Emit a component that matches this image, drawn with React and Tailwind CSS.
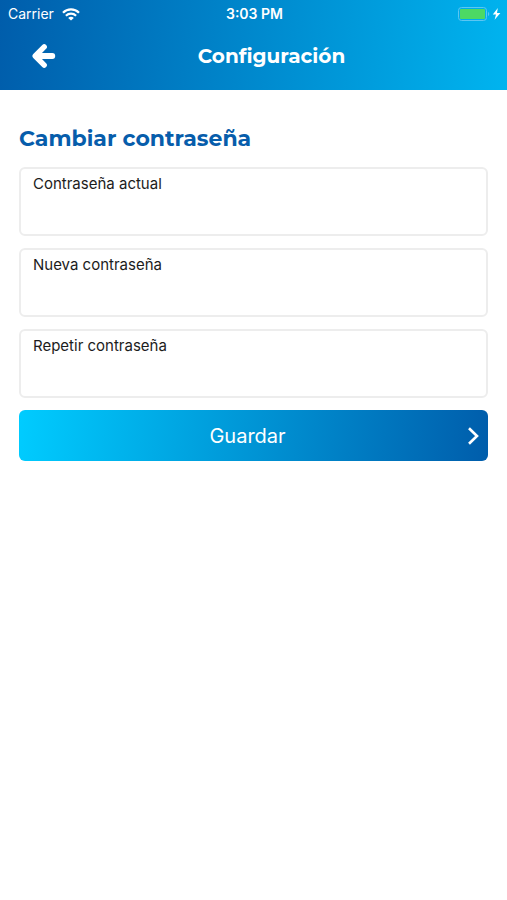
import { useState } from "react";

const FIELDS = [
  { id: "current", label: "Contraseña actual", autoComplete: "current-password" },
  { id: "next", label: "Nueva contraseña", autoComplete: "new-password" },
  { id: "repeat", label: "Repetir contraseña", autoComplete: "new-password" },
];

function WifiIcon() {
  return (
    <svg className="w-[18px] h-[13px]" viewBox="0 0 18 13" fill="none" stroke="currentColor" strokeWidth="2.2">
      <path d="M1 4.7C5.4 0.2 12.6 0.2 17 4.7" />
      <path d="M3.9 7.7C6.8 4.9 11.2 4.9 14.1 7.7" />
      <path d="M9 12.6L6.2 9.9C7.8 8.4 10.2 8.4 11.8 9.9Z" fill="currentColor" stroke="none" />
    </svg>
  );
}

function BatteryIcon() {
  return (
    <svg className="w-[43px] h-[14px]" viewBox="0 0 43 14" fill="none">
      <rect x="0.5" y="0.5" width="28" height="13" rx="3" stroke="#5cc6f3" />
      <rect x="2" y="2" width="25" height="10" rx="1" fill="#4cd964" />
      <path d="M30 5C31.6 5.4 31.6 8.6 30 9Z" fill="#5cc6f3" />
      <path d="M39.8 1L34.8 7.6H38L36.6 12.8L42.4 5.9H39Z" fill="#fff" />
    </svg>
  );
}

function BackIcon() {
  return (
    <svg
      className="w-6 h-6"
      viewBox="0 0 24 24"
      fill="none"
      stroke="currentColor"
      strokeWidth="5.4"
      strokeLinecap="round"
      strokeLinejoin="round"
    >
      <path d="M12.2 2.9L3.2 12L12.2 21.1" />
      <path d="M5 12H20.3" strokeWidth="5.8" />
    </svg>
  );
}

function ChevronIcon() {
  return (
    <svg className="w-3 h-[18px]" viewBox="0 0 12 18" fill="none" stroke="currentColor" strokeWidth="2.6">
      <path d="M1 1.2L9 9L1 16.8" />
    </svg>
  );
}

function StatusBar() {
  return (
    <div className="grid grid-cols-3 items-center h-7 pl-2 pr-1.5 text-sm">
      <div className="flex items-center gap-2">
        <span>Carrier</span>
        <WifiIcon />
      </div>
      <span className="text-center font-semibold">3:03 PM</span>
      <div className="flex justify-end">
        <BatteryIcon />
      </div>
    </div>
  );
}

function PasswordField({ field, value, onChange }) {
  return (
    <div className="flex flex-col h-[69px] border-2 border-[#ededed] rounded-md px-3 pt-[5px]">
      <label htmlFor={field.id} className="text-[15px] leading-5 text-[#1c1c1c]">
        {field.label}
      </label>
      <input
        id={field.id}
        type="password"
        autoComplete={field.autoComplete}
        value={value}
        onChange={(e) => onChange(e.target.value)}
        className="flex-1 min-h-0 w-full bg-transparent outline-none"
      />
    </div>
  );
}

export default function App() {
  const [values, setValues] = useState({ current: "", next: "", repeat: "" });

  function handleSubmit(e) {
    e.preventDefault();
  }

  return (
    <div className="min-h-screen bg-white font-['Inter',sans-serif]">
      <header className="h-[90px] text-white bg-[linear-gradient(95deg,#005dab,#00b4ef)]">
        <StatusBar />
        <div className="flex items-center h-14 pl-8 pr-5">
          <button type="button" aria-label="Volver">
            <BackIcon />
          </button>
          <h1 className="flex-1 text-center font-['Montserrat',sans-serif] text-xl leading-7 font-bold">
            Configuración
          </h1>
        </div>
      </header>

      <main className="px-[19px] pt-[33px]">
        <h2 className="font-['Montserrat',sans-serif] text-[22px] leading-8 font-bold text-[#075dab]">
          Cambiar contraseña
        </h2>
        <form onSubmit={handleSubmit} className="flex flex-col gap-3 mt-3">
          {FIELDS.map((f) => (
            <PasswordField
              key={f.id}
              field={f}
              value={values[f.id]}
              onChange={(v) => setValues({ ...values, [f.id]: v })}
            />
          ))}
          <button
            type="submit"
            className="flex items-center h-[51px] px-2 rounded-md text-white text-xl bg-[linear-gradient(95deg,#00ccff,#005dab)]"
          >
            <span className="flex-1 text-center">Guardar</span>
            <ChevronIcon />
          </button>
        </form>
      </main>
    </div>
  );
}
